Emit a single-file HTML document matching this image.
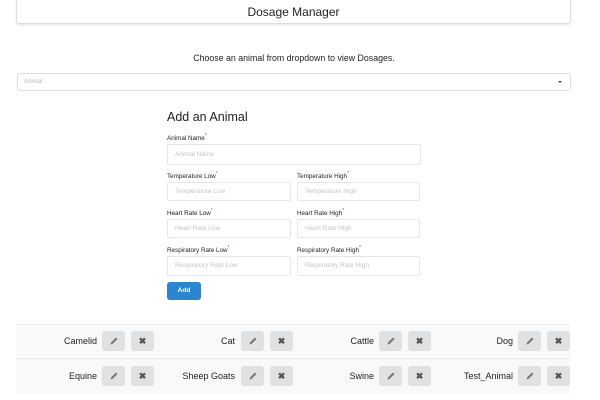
<!DOCTYPE html>
<html><head><meta charset="utf-8"><style>
*{box-sizing:border-box;margin:0;padding:0}
body{width:600px;height:400px;background:#fff;font-family:"Liberation Sans",sans-serif;color:#222;position:relative;overflow:hidden}
.a{position:absolute}
.hdr{left:16px;top:-4px;width:555px;height:28px;border:1px solid #ddd;border-radius:3px;box-shadow:0 1px 2px rgba(0,0,0,.12);text-align:center;font-size:12px;line-height:30px;color:#222}
.sub{left:0;width:588px;top:53px;text-align:center;font-size:8.8px;color:#222}
.sel{left:17px;top:73px;width:554px;height:18px;border:1px solid #ddd;border-radius:3px;font-size:6px;color:#bbb;padding-left:6px;line-height:16px}
.sel:after{content:"";position:absolute;right:8px;top:7px;border:2px solid transparent;border-top:2.5px solid #444}
h2{position:absolute;left:167px;top:110px;font-size:12.5px;font-weight:normal;color:#222}
.lbl{font-size:6.3px;color:#222}
.lbl sup{font-size:5px;color:#c44}
.in{border:1px solid #e6e6e6;border-radius:2px;font-size:6.5px;color:#c4c4c4;padding-left:7px}
.btn{left:167px;top:282px;width:34px;height:18px;background:#2b85cf;border-radius:3px;color:#fff;font-size:6.5px;font-weight:bold;text-align:center;line-height:18px}
.band{left:16px;width:554px;background:#f9f9f9}
.nm{font-size:9px;color:#222;text-align:right;width:100px}
.ib{width:23px;height:20px;background:#e0e1e2;border-radius:3px;text-align:center;color:#555;font-size:9px;line-height:20px;font-weight:bold}
.ib svg{margin-top:5px}
</style></head><body>
<div class="a hdr">Dosage Manager</div>
<div class="a sub">Choose an animal from dropdown to view Dosages.</div>
<div class="a sel">Animal</div>
<h2>Add an Animal</h2>
<div class="a lbl" style="left:167px;top:133px">Animal Name<sup>*</sup></div>
<div class="a in" style="left:167px;top:144px;width:254px;height:21px;line-height:19px">Animal Name</div>
<div class="a lbl" style="left:167px;top:171px">Temperature Low<sup>*</sup></div>
<div class="a lbl" style="left:297px;top:171px">Temperature High<sup>*</sup></div>
<div class="a in" style="left:167px;top:182px;width:124px;height:19px;line-height:17px">Temperature Low</div>
<div class="a in" style="left:297px;top:182px;width:123px;height:19px;line-height:17px">Temperature High</div>
<div class="a lbl" style="left:167px;top:208px">Heart Rate Low<sup>*</sup></div>
<div class="a lbl" style="left:297px;top:208px">Heart Rate High<sup>*</sup></div>
<div class="a in" style="left:167px;top:219px;width:124px;height:19px;line-height:17px">Heart Rate Low</div>
<div class="a in" style="left:297px;top:219px;width:123px;height:19px;line-height:17px">Heart Rate High</div>
<div class="a lbl" style="left:167px;top:245px">Respiratory Rate Low<sup>*</sup></div>
<div class="a lbl" style="left:297px;top:245px">Respiratory Rate High<sup>*</sup></div>
<div class="a in" style="left:167px;top:256px;width:124px;height:20px;line-height:18px">Respiratory Rate Low</div>
<div class="a in" style="left:297px;top:256px;width:123px;height:20px;line-height:18px">Respiratory Rate High</div>
<div class="a btn">Add</div>
<div class="a band" style="top:324px;height:33px;border-top:1px solid #eee"></div>
<div class="a band" style="top:358px;height:36px;border-top:1px solid #e6e6e6"></div>
<div class="a nm" style="left:-3px;top:336px">Camelid</div>
<div class="a nm" style="left:135px;top:336px">Cat</div>
<div class="a nm" style="left:274px;top:336px">Cattle</div>
<div class="a nm" style="left:413px;top:336px">Dog</div>
<div class="a nm" style="left:-3px;top:371px">Equine</div>
<div class="a nm" style="left:135px;top:371px">Sheep Goats</div>
<div class="a nm" style="left:274px;top:371px">Swine</div>
<div class="a nm" style="left:413px;top:371px">Test_Animal</div>
<div class="a ib" style="left:102px;top:331px"><svg width="10" height="10" viewBox="0 0 10 10"><path d="M1.5 8.5 L2 6.5 L7 1.5 L8.5 3 L3.5 8 Z" fill="#777"/></svg></div>
<div class="a ib" style="left:131px;top:331px">✖</div>
<div class="a ib" style="left:241px;top:331px"><svg width="10" height="10" viewBox="0 0 10 10"><path d="M1.5 8.5 L2 6.5 L7 1.5 L8.5 3 L3.5 8 Z" fill="#777"/></svg></div>
<div class="a ib" style="left:270px;top:331px">✖</div>
<div class="a ib" style="left:379px;top:331px"><svg width="10" height="10" viewBox="0 0 10 10"><path d="M1.5 8.5 L2 6.5 L7 1.5 L8.5 3 L3.5 8 Z" fill="#777"/></svg></div>
<div class="a ib" style="left:408px;top:331px">✖</div>
<div class="a ib" style="left:518px;top:331px"><svg width="10" height="10" viewBox="0 0 10 10"><path d="M1.5 8.5 L2 6.5 L7 1.5 L8.5 3 L3.5 8 Z" fill="#777"/></svg></div>
<div class="a ib" style="left:547px;top:331px">✖</div>
<div class="a ib" style="left:102px;top:366px"><svg width="10" height="10" viewBox="0 0 10 10"><path d="M1.5 8.5 L2 6.5 L7 1.5 L8.5 3 L3.5 8 Z" fill="#777"/></svg></div>
<div class="a ib" style="left:131px;top:366px">✖</div>
<div class="a ib" style="left:241px;top:366px"><svg width="10" height="10" viewBox="0 0 10 10"><path d="M1.5 8.5 L2 6.5 L7 1.5 L8.5 3 L3.5 8 Z" fill="#777"/></svg></div>
<div class="a ib" style="left:270px;top:366px">✖</div>
<div class="a ib" style="left:379px;top:366px"><svg width="10" height="10" viewBox="0 0 10 10"><path d="M1.5 8.5 L2 6.5 L7 1.5 L8.5 3 L3.5 8 Z" fill="#777"/></svg></div>
<div class="a ib" style="left:408px;top:366px">✖</div>
<div class="a ib" style="left:518px;top:366px"><svg width="10" height="10" viewBox="0 0 10 10"><path d="M1.5 8.5 L2 6.5 L7 1.5 L8.5 3 L3.5 8 Z" fill="#777"/></svg></div>
<div class="a ib" style="left:547px;top:366px">✖</div>
</body></html>
